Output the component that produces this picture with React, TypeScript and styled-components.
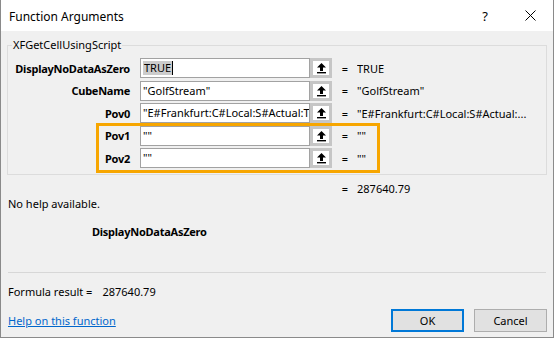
import React from "react";
import styled, { createGlobalStyle, css } from "styled-components";

const GlobalStyle = createGlobalStyle`
    html, body {
        margin: 0;
        padding: 0;
        background: #ffffff;
    }
    body {
        font-family: "Noto Sans", "Open Sans", sans-serif;
        font-size: 11px;
        color: #000000;
    }
`

const args = [
    { name: "DisplayNoDataAsZero", input: "TRUE", value: "TRUE", selected: true },
    { name: "CubeName", input: "\"GolfStream\"", value: "\"GolfStream\"" },
    { name: "Pov0", input: "\"E#Frankfurt:C#Local:S#Actual:T#2022M3:V#Periodic", value: "\"E#Frankfurt:C#Local:S#Actual:..." },
    { name: "Pov1", input: "\"\"", value: "\"\"" },
    { name: "Pov2", input: "\"\"", value: "\"\"" },
];

const CollapseIcon = () => (
    <svg width="11" height="12" viewBox="0 0 11 12">
        <path d="M5.5 1 L10 5.5 L7 5.5 L7 9 L4 9 L4 5.5 L1 5.5 Z" fill="#000" />
        <rect x="1" y="10" width="9" height="1.4" fill="#000" />
    </svg>
)

const CloseIcon = () => (
    <svg width="11" height="11" viewBox="0 0 11 11">
        <path d="M0.5 0.5 L10.5 10.5 M10.5 0.5 L0.5 10.5" stroke="#000" strokeWidth="1" />
    </svg>
)

const ArgRow = ({ arg }: { arg: typeof args[number] }) => (
    <Row>
        <ArgLabel>{arg.name}</ArgLabel>
        <RefEdit>
            {arg.selected ? (
                <><Selected>{arg.input}</Selected><Caret /></>
            ) : arg.input}
        </RefEdit>
        <CollapseButton><CollapseIcon /></CollapseButton>
        <Eq>=</Eq>
        <ArgValue>{arg.value}</ArgValue>
    </Row>
)

export default function App() {
    return (
        <>
            <GlobalStyle />
            <Window>
                <TitleBar>
                    <Title>Function Arguments</Title>
                    <TitleButton $w={44}>?</TitleButton>
                    <TitleButton $w={46}><CloseIcon /></TitleButton>
                </TitleBar>
                <Body>
                    <Group>
                        <Legend>XFGetCellUsingScript</Legend>
                        <Rows>
                            {args.slice(0, 3).map((a) => <ArgRow key={a.name} arg={a} />)}
                            <Marked>
                                {args.slice(3).map((a) => <ArgRow key={a.name} arg={a} />)}
                            </Marked>
                        </Rows>
                    </Group>
                    <ResultLine>
                        <Eq>=</Eq>
                        <ArgValue>287640.79</ArgValue>
                    </ResultLine>
                    <HelpText>No help available.</HelpText>
                    <ArgHelpName>DisplayNoDataAsZero</ArgHelpName>
                    <Separator />
                    <FormulaResult>
                        <span>Formula result =</span>
                        <span>287640.79</span>
                    </FormulaResult>
                    <Footer>
                        <HelpLink href="#">Help on this function</HelpLink>
                        <DialogButton $default>OK</DialogButton>
                        <DialogButton>Cancel</DialogButton>
                    </Footer>
                </Body>
            </Window>
        </>
    )
}

const Window = styled.div`
    width: 554px;
    height: 338px;
    box-sizing: border-box;
    border: 1px solid #8a8a8a;
    border-top: none;
    display: flex;
    flex-direction: column;
    background: #f0f0f0;
`

const TitleBar = styled.div`
    height: 31px;
    flex: none;
    background: #ffffff;
    display: flex;
    align-items: center;
    padding-left: 8px;
`

const Title = styled.div`
    flex: 1;
    font-size: 12px;
    padding-top: 1px;
`

const TitleButton = styled.div<{ $w: number }>`
    width: ${(p) => p.$w}px;
    display: flex;
    justify-content: center;
    align-items: center;
    font-size: 13px;
`

const Body = styled.div`
    flex: 1;
    display: flex;
    flex-direction: column;
    padding: 0 6px 0 6px;
`

const Group = styled.fieldset`
    margin: 7px 0 0 0;
    padding: 6px 0 6px 0;
    border: 1px solid #dcdcdc;
    min-width: 0;
`

const Legend = styled.legend`
    padding: 0 1px;
    margin-left: 4px;
    font-size: 11px;
    line-height: 14px;
`

const Rows = styled.div`
    display: flex;
    flex-direction: column;
    gap: 2.5px;
`

const Marked = styled.div`
    position: relative;
    display: flex;
    flex-direction: column;
    gap: 2.5px;
    &::after {
        content: "";
        position: absolute;
        left: 88px;
        width: 284px;
        top: -3px;
        bottom: -5px;
        box-sizing: border-box;
        border: 3px solid #f7a600;
        pointer-events: none;
    }
`

const Row = styled.div`
    display: grid;
    grid-template-columns: 132px 170px 22px 25px 1fr;
    align-items: center;
    height: 20px;
`

const ArgLabel = styled.div`
    font-weight: 700;
    text-align: right;
    padding-right: 10px;
    letter-spacing: -0.25px;
    white-space: nowrap;
`

const RefEdit = styled.div`
    height: 20px;
    box-sizing: border-box;
    border: 1px solid #a2a2a2;
    background: #ffffff;
    padding-left: 2px;
    display: flex;
    align-items: center;
    white-space: nowrap;
    overflow: hidden;
    line-height: 14px;
`

const Selected = styled.span`
    background: #cccccc;
    padding: 0 1px;
`

const Caret = styled.span`
    display: inline-block;
    width: 1px;
    height: 14px;
    background: #000;
`

const CollapseButton = styled.div`
    height: 20px;
    box-sizing: border-box;
    border: 3px solid #c6c6c6;
    background: #ffffff;
    display: flex;
    align-items: center;
    justify-content: center;
`

const Eq = styled.div`
    grid-column: 4;
    text-align: center;
    padding-left: 1px;
`

const ArgValue = styled.div`
    grid-column: 5;
    white-space: nowrap;
    overflow: hidden;
`

const ResultLine = styled.div`
    display: grid;
    grid-template-columns: 133px 170px 22px 25px 1fr;
    margin-top: 5px;
    height: 16px;
    align-items: center;
`

const HelpText = styled.div`
    margin-top: 0;
    padding-left: 1px;
    line-height: 16px;
`

const ArgHelpName = styled.div`
    font-weight: 700;
    padding-left: 85px;
    letter-spacing: -0.25px;
    margin-top: 12px;
    line-height: 16px;
`

const Separator = styled.div`
    margin-top: 32px;
    height: 1px;
    background: #d7d7d7;
    margin-left: 1px;
    margin-right: 1px;
`

const FormulaResult = styled.div`
    display: flex;
    gap: 10px;
    margin-top: 11px;
    padding-left: 1px;
    line-height: 16px;
`

const Footer = styled.div`
    display: flex;
    align-items: center;
    margin-top: 9px;
    gap: 10px;
`

const HelpLink = styled.a`
    flex: 1;
    color: #0066cc;
    padding-left: 1px;
    text-decoration: underline;
`

const DialogButton = styled.div<{ $default?: boolean }>`
    width: 73px;
    height: 23px;
    box-sizing: border-box;
    background: #e1e1e1;
    border: 1px solid #adadad;
    display: flex;
    align-items: center;
    justify-content: center;
    ${(p) => p.$default && css`
        border: 2px solid #0078d7;
    `}
`
